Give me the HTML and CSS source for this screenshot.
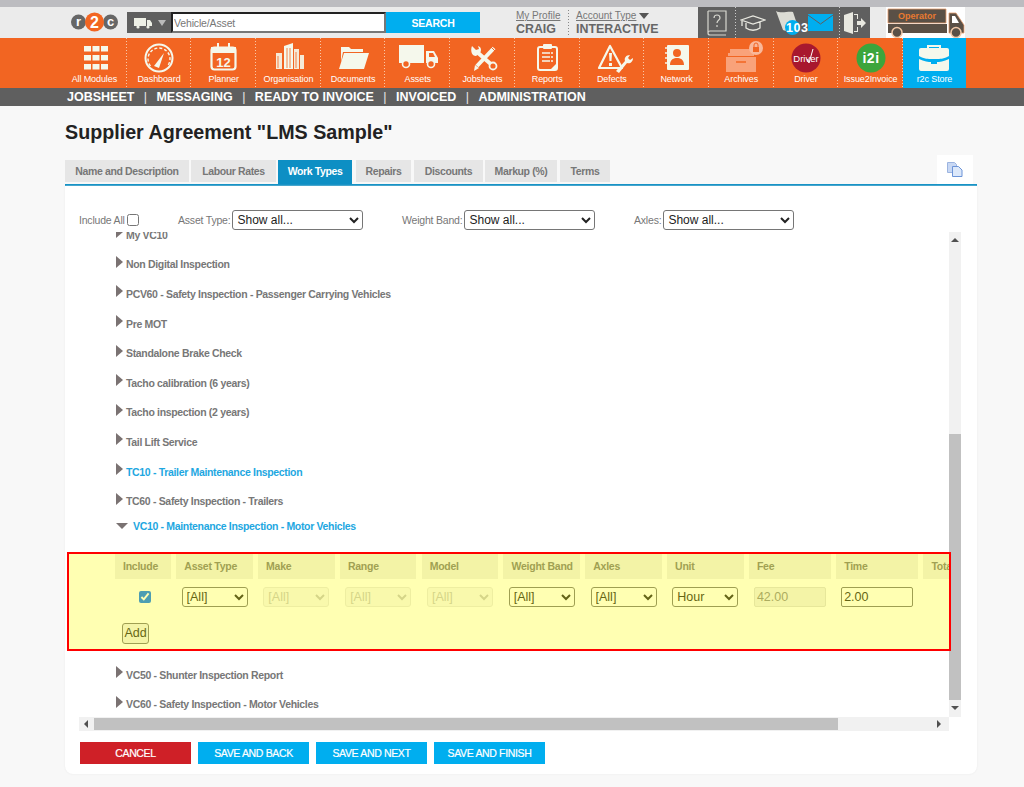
FILE: index.html
```html
<!DOCTYPE html>
<html lang="en">
<head>
<meta charset="utf-8">
<title>Supplier Agreement</title>
<link rel="stylesheet" href="styles.css">
</head>
<body>
<div class="topstrip"></div>
<header class="header">
  <svg class="logo" width="50" height="22" viewBox="0 0 50 22">
    <circle cx="8.5" cy="11" r="7.5" fill="#666"/><circle cx="40.5" cy="11" r="7.5" fill="#666"/><circle cx="24.5" cy="11" r="9.5" fill="#f26522"/>
    <text x="8.5" y="15" class="logo-t">r</text><text x="24.5" y="16.500" class="logo-t2">2</text><text x="40.5" y="15" class="logo-t">c</text>
  </svg>
  <div class="assetpick">
    <svg width="20" height="12" viewBox="0 0 20 12"><path d="M1 1h12v8H1zM14 3h3l2 3v3h-5z" fill="#eef0e6"/><circle cx="5" cy="10" r="1.6" fill="#eef0e6"/><circle cx="15" cy="10" r="1.6" fill="#eef0e6"/></svg>
    <span class="caret"></span>
  </div>
  <input class="search-input" type="text" placeholder="Vehicle/Asset">
  <button class="search-btn">SEARCH</button>
  <div class="profile">
    <a class="plink">My Profile</a>
    <strong>CRAIG</strong>
  </div>
  <div class="account">
    <span class="acct-row"><a class="plink">Account Type</a><i class="acct-caret"></i></span>
    <strong>INTERACTIVE</strong>
  </div>
  <div class="tools">
    <div class="tool tool-book"><svg width="22" height="26" viewBox="0 0 22 26" fill="none" stroke="#d8d8d0" stroke-width="1.2"><path d="M2 1h18v20H4a2 2 0 0 0 0 4h16M2 1v22"/><path d="M8 8c0-4 6-4 6 0 0 2-3 2-3 5" /><path d="M11 15v2"/></svg></div>
    <div class="tool tool-hat"><svg width="26" height="18" viewBox="0 0 26 18" fill="none" stroke="#e8e8e0" stroke-width="1.3"><path d="M1 6l12-4 12 4-12 4zM6 9v5c4 3 10 3 14 0V8M2 7v5"/></svg></div>
    <div class="tool tool-flag">
      <svg width="24" height="26" viewBox="0 0 24 26" fill="#dcdcd4"><path d="M0 1c5 3 12 0 17 1l4 12-3 6c-4-1-8 2-11 0L0 1z"/></svg>
      <span class="badge"></span><span class="badge-text">103</span>
    </div>
    <div class="tool tool-mail"><svg width="25" height="17" viewBox="0 0 25 17"><path d="M0 0h25v17H0z" fill="#00aeef"/><path d="M0 1l12.5 9L25 1" fill="none" stroke="#5f5f5f" stroke-width="1"/></svg></div>
    <div class="tool tool-door"><svg width="24" height="24" viewBox="0 0 24 24" fill="#e8e8e0"><path d="M1 4l9-3v22l-9-3z"/><path d="M11 3h4v5h-1V4h-3zM11 21h4v-5h-1v4h-3z"/><path d="M14 10h4V7l5 5-5 5v-3h-4z"/></svg></div>
  </div>
  <div class="operator">
    <svg width="79" height="31" viewBox="0 0 79 31">
      <path d="M2 2h58v14H2z" fill="#5a5046" stroke="#e8a070" stroke-width=".8"/>
      <path d="M2 17h59v9H2z" fill="#5a5046"/>
      <path d="M63 6h7l8 12v8H63z" fill="#5a5046" stroke="#e8a070" stroke-width=".8"/>
      <path d="M66 9h3l4 7h-7z" fill="#fff"/>
      <circle cx="11" cy="25.500" r="5" fill="#5a5046" stroke="#f0c8a8" stroke-width="1.500"/><circle cx="70" cy="25.500" r="5" fill="#5a5046" stroke="#f0c8a8" stroke-width="1.500"/>
      <text x="31" y="12" class="op-t">Operator</text>
    </svg>
  </div>
</header>

<nav class="modules">
  <a class="mod"><svg class="mi" viewBox="0 0 64 36"><g fill="#f5f8ec"><rect x="22" y="8" width="7" height="5.5"/><rect x="30.5" y="8" width="7" height="5.5"/><rect x="39" y="8" width="7" height="5.5"/><rect x="22" y="17" width="7" height="5.5"/><rect x="30.5" y="17" width="7" height="5.5"/><rect x="39" y="17" width="7" height="5.5"/><rect x="22" y="26" width="7" height="5.5"/><rect x="30.5" y="26" width="7" height="5.5"/><rect x="39" y="26" width="7" height="5.5"/></g></svg><span>All Modules</span></a>
  <a class="mod"><svg class="mi" viewBox="0 0 64 36"><circle cx="32" cy="20" r="13.5" fill="none" stroke="#f5f8ec" stroke-width="2"/><path d="M23.500 28a11 11 0 1 1 17 0" fill="none" stroke="#f5f8ec" stroke-width="1.400" stroke-dasharray="3 2"/><path d="M27 28l10-13-5 15z" fill="#f5f8ec"/></svg><span>Dashboard</span></a>
  <a class="mod"><svg class="mi" viewBox="0 0 64 36"><rect x="19.500" y="9.500" width="24" height="22" rx="3" fill="none" stroke="#f5f8ec" stroke-width="2.200"/><path d="M19 9h25v6H19z" fill="#f5f8ec"/><path d="M26 5v7M37 5v7" stroke="#f5f8ec" stroke-width="2"/><text x="31.500" y="29" class="cal">12</text></svg><span>Planner</span></a>
  <a class="mod"><svg class="mi" viewBox="0 0 64 36"><g fill="#f5f8ec"><path d="M28 8l9-3v26h-9z"/><path d="M20 15h6v16h-6zM38 11h5v20h-5zM44 17h4v14h-4z" opacity=".9"/></g><path d="M31 10v20M34 10v20M22 18v12M40 14v16" stroke="#f26522" stroke-width=".8"/></svg><span>Organisation</span></a>
  <a class="mod"><svg class="mi" viewBox="0 0 64 36"><path d="M20 9h8l2 2h12v3H22l-2 10z" fill="#f5f8ec"/><path d="M23 15h25l-5 16H18z" fill="#f5f8ec"/></svg><span>Documents</span></a>
  <a class="mod"><svg class="mi" viewBox="0 0 64 36"><path d="M13 7h25v18H13z" fill="#f5f8ec"/><path d="M40 13h8l4 7v5H40z" fill="#f5f8ec"/><path d="M43 15h4l2 4h-6z" fill="#f26522"/><circle cx="20" cy="26" r="3.500" fill="#f26522" stroke="#f5f8ec" stroke-width="1.600"/><circle cx="45" cy="26" r="3.500" fill="#f26522" stroke="#f5f8ec" stroke-width="1.600"/></svg><span>Assets</span></a>
  <a class="mod"><svg class="mi" viewBox="0 0 64 36"><path d="M27 14L43 28" stroke="#f5f8ec" stroke-width="4"/><circle cx="43" cy="28" r="3.500" fill="#f26522" stroke="#f5f8ec" stroke-width="1.800"/><path d="M22 8l4 4 3-1-1-3c3 1 4 4 2 7l-4 3c-4 0-6-5-4-10z" fill="#f5f8ec"/><path d="M44 10L27 28" stroke="#f5f8ec" stroke-width="4"/><path d="M24 33l1-6 4 3z" fill="#f5f8ec"/><path d="M41 9l4 4" stroke="#f26522" stroke-width="1"/></svg><span>Jobsheets</span></a>
  <a class="mod"><svg class="mi" viewBox="0 0 64 36"><rect x="23" y="9" width="19" height="23" rx="2" fill="none" stroke="#f5f8ec" stroke-width="2"/><rect x="28" y="6" width="9" height="5" rx="1" fill="#f5f8ec"/><path d="M27 15h11M27 19h11M27 23h11" stroke="#f5f8ec" stroke-width="1.500" stroke-dasharray="8 1"/><path d="M35 32l7-7v7z" fill="#f5f8ec"/></svg><span>Reports</span></a>
  <a class="mod"><svg class="mi" viewBox="0 0 64 36"><path d="M30 8L19 30h23z" fill="none" stroke="#f5f8ec" stroke-width="2.200" stroke-linejoin="round"/><path d="M29 15h3l-.5 8h-2zM29 25h3v3h-3z" fill="#f5f8ec"/><path d="M36 33l9-10c-1-3 1-6 5-6l-2 3 2 2 3-2c0 4-3 6-6 5l-8 10z" fill="#f5f8ec"/></svg><span>Defects</span></a>
  <a class="mod"><svg class="mi" viewBox="0 0 64 36"><rect x="22" y="7" width="22" height="25" rx="1" fill="#f5f8ec"/><path d="M32 11a3.500 3.500 0 0 1 0 8 3.500 3.500 0 0 1 0-8zM25 27c0-6 4-7 7-7s7 1 7 7z" fill="#f26522"/><path d="M20 10h4M20 15h4M20 20h4M20 25h4" stroke="#f5f8ec" stroke-width="1.500"/></svg><span>Network</span></a>
  <a class="mod"><svg class="mi" viewBox="0 0 64 36"><g fill="#f9a27a"><path d="M21 11h24v5H21z"/><path d="M17 19h30v15H17z"/><path d="M19 15h26v3H19z"/></g><path d="M27 24h10" stroke="#f26522" stroke-width="1.500"/><circle cx="47" cy="10" r="7" fill="#f9b89a"/><rect x="44" y="9" width="6" height="5" fill="#f26522"/><path d="M45 9V7a2 2 0 0 1 4 0v2" fill="none" stroke="#f26522"/></svg><span>Archives</span></a>
  <a class="mod"><svg class="mi" viewBox="0 0 64 36"><circle cx="32" cy="20" r="14.500" fill="#a8182e"/><text x="32" y="24" class="drv">Driver</text><path d="M33 21l2 4 4-14" fill="none" stroke="#fff" stroke-width="1"/></svg><span>Driver</span></a>
  <a class="mod"><svg class="mi" viewBox="0 0 64 36"><circle cx="32" cy="20" r="14.500" fill="#3ca53c"/><text x="32" y="25" class="i2i">i2i</text></svg><span>Issue2Invoice</span></a>
  <a class="mod mod-store"><svg class="mi" viewBox="0 0 64 36"><path d="M26 11V8h12v3" fill="none" stroke="#f5f8ec" stroke-width="2"/><path d="M17 12a2 2 0 0 1 2-2h26a2 2 0 0 1 2 2v6c-5 3-10 3-12 3h-6c-2 0-7 0-12-3z" fill="#f5f8ec"/><path d="M17 21c5 2.500 10 3 12 3v2h6v-2c2 0 7-.5 12-3v10a2 2 0 0 1-2 2H19a2 2 0 0 1-2-2z" fill="#f5f8ec"/></svg><span>r2c Store</span></a>
</nav>

<nav class="subnav">
  <a>JOBSHEET</a><i>|</i><a>MESSAGING</a><i>|</i><a>READY TO INVOICE</a><i>|</i><a>INVOICED</a><i>|</i><a>ADMINISTRATION</a>
</nav>

<main class="page">
  <h1 class="title">Supplier Agreement "LMS Sample"</h1>
  <div class="tabs">
    <a class="tab t1">Name and Description</a>
    <a class="tab t2">Labour Rates</a>
    <a class="tab t3 active">Work Types</a>
    <a class="tab t4">Repairs</a>
    <a class="tab t5">Discounts</a>
    <a class="tab t6">Markup (%)</a>
    <a class="tab t7">Terms</a>
    <div class="copybox"><svg width="16" height="15" viewBox="0 0 16 15"><path d="M.5.5h7l2 2v8h-9z" fill="#c8d8f4" stroke="#9cb4e0"/><path d="M5.500 4.500h6l3.500 3.500v6.500H5.500z" fill="#dce8fa" stroke="#6c94d8"/></svg></div>
  </div>
  <section class="card">
    <div class="filters">
      <label class="f f1">Include All <input type="checkbox" class="incall"></label>
      <label class="f f2">Asset Type: <select class="fsel"><option>Show all...</option></select></label>
      <label class="f f3">Weight Band: <select class="fsel"><option>Show all...</option></select></label>
      <label class="f f4">Axles: <select class="fsel"><option>Show all...</option></select></label>
    </div>
    <div class="viewport">
      <div class="scroller">
        <ul class="tree">
          <li class="row"><i class="tri"></i>My VC10</li>
          <li class="row"><i class="tri"></i>Non Digital Inspection</li>
          <li class="row"><i class="tri"></i>PCV60 - Safety Inspection - Passenger Carrying Vehicles</li>
          <li class="row"><i class="tri"></i>Pre MOT</li>
          <li class="row"><i class="tri"></i>Standalone Brake Check</li>
          <li class="row"><i class="tri"></i>Tacho calibration (6 years)</li>
          <li class="row"><i class="tri"></i>Tacho inspection (2 years)</li>
          <li class="row"><i class="tri"></i>Tail Lift Service</li>
          <li class="row link"><i class="tri"></i>TC10 - Trailer Maintenance Inspection</li>
          <li class="row"><i class="tri"></i>TC60 - Safety Inspection - Trailers</li>
          <li class="row open link"><i class="tri-down"></i>VC10 - Maintenance Inspection - Motor Vehicles</li>
          <li class="detail">
            <div class="grid">
              <div class="th">Include</div><div class="th">Asset Type</div><div class="th">Make</div><div class="th">Range</div><div class="th">Model</div><div class="th">Weight Band</div><div class="th">Axles</div><div class="th">Unit</div><div class="th">Fee</div><div class="th">Time</div><div class="th">Total</div>
              <div class="td"><input type="checkbox" checked class="inc"></div>
              <div class="td"><select class="sel"><option>[All]</option></select></div>
              <div class="td"><select class="sel" disabled><option>[All]</option></select></div>
              <div class="td"><select class="sel" disabled><option>[All]</option></select></div>
              <div class="td"><select class="sel" disabled><option>[All]</option></select></div>
              <div class="td"><select class="sel"><option>[All]</option></select></div>
              <div class="td"><select class="sel"><option>[All]</option></select></div>
              <div class="td"><select class="sel"><option>Hour</option></select></div>
              <div class="td"><input class="num" type="text" value="42.00" disabled></div>
              <div class="td"><input class="num" type="text" value="2.00"></div>
              <div class="td"></div>
            </div>
            <button class="add">Add</button>
          </li>
          <li class="row"><i class="tri"></i>VC50 - Shunter Inspection Report</li>
          <li class="row"><i class="tri"></i>VC60 - Safety Inspection - Motor Vehicles</li>
        </ul>
      </div>
      <div class="vbar"><i class="arrow-up"></i><div class="vtrack"><div class="vthumb"></div></div><i class="arrow-down"></i></div>
      <div class="hbar"><i class="arrow-left"></i><div class="htrack"><div class="hthumb"></div></div><i class="arrow-right"></i></div>
    </div>
    <div class="actions">
      <button class="btn cancel">CANCEL</button>
      <button class="btn">SAVE AND BACK</button>
      <button class="btn">SAVE AND NEXT</button>
      <button class="btn">SAVE AND FINISH</button>
    </div>
    <div class="highlight"></div>
  </section>
</main>
</body>
</html>
```

FILE: styles.css
```css
* { box-sizing: border-box; }
html, body { margin: 0; padding: 0; }
body { width: 1024px; height: 787px; overflow: hidden; background: #f8f8f8; font-family: "Liberation Sans", Arial, sans-serif; color: #666; }
a { color: inherit; }

.topstrip { height: 7px; background: #bcbcc0; }

.header { height: 31px; background: #ebebeb; display: flex; align-items: stretch; padding-left: 70px; }
.logo { margin-top: 4px; flex: none; }
.logo-t { font: bold 13px "Liberation Sans", sans-serif; fill: #fff; text-anchor: middle; }
.logo-t2 { font: bold 16px "Liberation Sans", sans-serif; fill: #fff; text-anchor: middle; }
.assetpick { margin: 5px 0 0 7px; width: 44px; height: 21px; background: #5f5f5f; display: flex; align-items: center; padding-left: 6px; gap: 5px; }
.caret { width: 0; height: 0; border: 4.5px solid transparent; border-top: 6px solid #bbb; border-bottom: 0; }
.search-input { margin-top: 5px; width: 215px; height: 21px; border: 2px solid #222; border-right-color: #777; border-bottom-color: #777; padding: 0 1px; font: 10.5px "Liberation Sans", sans-serif; letter-spacing: -.15px; background: #fff; outline: 0; }
.search-input::placeholder { color: #777; }
.search-btn { margin-top: 5px; width: 94px; height: 21px; background: #00aeef; border: 0; color: #fff; font: bold 10.5px "Liberation Sans", sans-serif; letter-spacing: -.2px; padding: 0; }
.profile, .account { display: flex; flex-direction: column; color: #666; margin-top: 3px; height: 25px; }
.profile { margin-left: 36px; width: 52px; }
.account { width: 130px; background-image: linear-gradient(#888 50%, transparent 50%); background-size: 1px 3px; background-repeat: repeat-y; padding-left: 8px; }
.plink { font-size: 10px; line-height: 12px; text-decoration: underline; color: #777; }
.profile strong, .account strong { font-size: 12.4px; line-height: 14px; color: #666; }
.acct-row { display: flex; align-items: center; gap: 3px; height: 12px; }
.acct-caret { width: 0; height: 0; border: 5px solid transparent; border-top: 6px solid #555; border-bottom: 0; }

.tools { width: 172px; background: #5f5f5f; display: flex; align-items: center; }
.tool { position: relative; display: flex; align-items: center; justify-content: center; height: 100%; }
.tool + .tool { background-image: linear-gradient(#ccc 50%, transparent 50%); background-size: 1px 3px; background-repeat: repeat-y; }
.tool-book { width: 37px; }
.tool-hat { width: 35px; }
.tool-flag { width: 31px; justify-content: flex-start; padding-left: 6px; background-image: none !important; }
.tool-mail { width: 38px; background-image: none !important; }
.tool-door { width: 31px; }
.badge { position: absolute; left: 15px; top: 13px; width: 15px; height: 15px; border-radius: 50%; background: #00aeef; }
.badge-text { position: absolute; left: 16px; top: 14px; font: bold 12.5px/14px "Liberation Sans", sans-serif; color: #fff; letter-spacing: .5px; }
.operator { margin-left: 16px; width: 79px; background: #fff; }
.operator svg { display: block; }
.op-t { font: bold 9px "Liberation Sans", sans-serif; fill: #e87a30; text-anchor: middle; }

.modules { height: 50px; background: #f26522; display: flex; padding-left: 62px; }
.mod { width: 64.7px; height: 50px; flex: none; display: flex; flex-direction: column; align-items: center; background-image: linear-gradient(#f8c8a8 50%, transparent 50%); background-size: 1px 3px; background-repeat: repeat-y; background-position: right top; }
.mod span { font-size: 9px; line-height: 10px; color: #fff; white-space: nowrap; letter-spacing: -.1px; }
.mi { width: 64px; height: 36px; flex: none; display: block; }
.mod-store { background: #00aeef; width: 63px; }
.cal { font: bold 13px "Liberation Sans", sans-serif; fill: #f5f8ec; text-anchor: middle; }
.drv { font: 9.5px "Liberation Sans", sans-serif; fill: #fff; text-anchor: middle; }
.i2i { font: bold 14px "Liberation Sans", sans-serif; fill: #fff; text-anchor: middle; letter-spacing: .5px; }

.subnav { height: 18px; background: #5f5f5f; display: flex; align-items: center; padding-left: 67px; color: #fff; font-size: 12.5px; font-weight: bold; line-height: 18px; white-space: nowrap; }
.subnav i { font-style: normal; margin: 0 9.4px; color: #e8e8e8; font-weight: normal; }

.page { padding: 14px 47px 0 65px; }
.title { margin: 0 0 16px; font-size: 19.7px; line-height: 24px; font-weight: bold; color: #222; }

.tabs { display: flex; align-items: flex-start; height: 26px; border-bottom: 2px solid #0d8fc4; position: relative; }
.tab { height: 22px; background: #e6e6e6; color: #777; font-size: 10.5px; letter-spacing: -.38px; font-weight: bold; line-height: 22px; text-align: center; white-space: nowrap; }
.tab.active { height: 24px; background: #0d8fc4; color: #fff; }
.t1 { width: 124px; margin-right: 2px; }
.t2 { width: 85px; margin-right: 2px; }
.t3 { width: 74px; margin-right: 4px; }
.t4 { width: 55px; margin-right: 3px; }
.t5 { width: 69px; margin-right: 2px; }
.t6 { width: 72px; margin-right: 3px; }
.t7 { width: 50px; }
.copybox { width: 36px; height: 29px; background: #fff; margin: -5px 4px 0 auto; display: flex; align-items: center; justify-content: center; }

.card { position: relative; width: 912px; height: 588px; background: #fff; border-radius: 0 0 8px 8px; box-shadow: 0 0 2px #e8e8e8; padding: 24px 14px 0; }
.filters { display: flex; align-items: center; height: 20px; font-size: 10.5px; letter-spacing: -.2px; color: #777; }
.f { display: flex; align-items: center; gap: 2px; white-space: nowrap; }
.f1 { width: 99px; }
.f2 { width: 224px; }
.f3 { width: 232px; }
.incall { width: 12px; height: 12px; margin: 0; }
.fsel { width: 131px; height: 20px; font: 12px "Liberation Sans", sans-serif; letter-spacing: 0; padding: 0; border: 1px solid #767676; border-radius: 3px; background-color: #fff; color: #222; }

.viewport { margin-top: 2px; width: 882px; display: grid; grid-template-columns: 870px 12px; grid-template-rows: 485px 14px; }
.scroller { overflow: hidden; position: relative; }
.tree { list-style: none; margin: -12px 0 0; padding: 0; }
.row { height: 29.6px; padding-left: 37px; display: flex; align-items: center; font-size: 10.5px; letter-spacing: -.33px; font-weight: bold; color: #777; white-space: nowrap; }
.row.link { color: #1ea7e1; }
.row.open { height: 20px; padding-top: 1px; }
.tri { width: 0; height: 0; border: 6.5px solid transparent; border-left: 7px solid #7a7272; border-right: 0; margin: -5px 3px 0 0; flex: none; }
.tri-down { width: 0; height: 0; border: 6.5px solid transparent; border-top: 6px solid #7a7272; border-bottom: 0; margin-right: 5px; flex: none; }
.detail { padding: 18px 0 16px 36px; }
.grid { display: grid; grid-template-columns: 56px repeat(7, 76.5px) 82px 82px 60px; grid-template-rows: 25px 20px; column-gap: 5.3px; row-gap: 8px; }
.th { background: #eee; color: #777; font-size: 10.5px; letter-spacing: -.25px; font-weight: bold; line-height: 25px; padding-left: 8px; white-space: nowrap; overflow: hidden; }
.td { display: flex; justify-content: center; align-items: center; }
.sel { width: 66px; height: 20px; font: 12.5px "Liberation Sans", sans-serif; padding: 0; border: 1px solid #767676; border-radius: 3px; background-color: #fff; color: #222; }
.sel:disabled { border-color: #ddd; background-color: #f4f4f4; color: #aaa; }
.num { width: 72px; height: 20px; font: 12.5px "Liberation Sans", sans-serif; padding: 0 2px; margin: 1px 0 0; border: 1px solid #767676; border-radius: 2px; background: #fff; color: #222; }
.num:disabled { background: #f0f0f0; border-color: #ddd; color: #888; }
.inc { width: 12px; height: 12px; margin: 0 0 0 3px; }
.add { display: block; margin: 16px 0 0 7px; font: 12.5px "Liberation Sans", sans-serif; height: 21px; width: 27px; padding: 0; border: 1px solid #767676; border-radius: 3px; background: #efefef; color: #222; }

.vbar { background: #f1f1f1; display: flex; flex-direction: column; align-items: center; grid-row: 1 / 3; grid-column: 2; height: 485px; }
.vtrack { flex: 1; width: 100%; padding-top: 188px; }
.vthumb { height: 266px; background: #c1c1c1; }
.arrow-up { margin: 6px 0 4px; width: 0; height: 0; border: 4px solid transparent; border-bottom: 4px solid #505050; border-top: 0; }
.arrow-down { margin: 5px 0 7px; width: 0; height: 0; border: 4px solid transparent; border-top: 4px solid #505050; border-bottom: 0; }
.hbar { background: #f1f1f1; display: flex; align-items: center; grid-row: 2; grid-column: 1 / 3; padding: 0 8px 0 5px; width: 870px; }
.htrack { flex: 1; height: 12px; padding-left: 6px; }
.hthumb { width: 744px; height: 12px; background: #c1c1c1; }
.arrow-left { width: 0; height: 0; border: 4px solid transparent; border-right: 4px solid #505050; border-left: 0; }
.arrow-right { width: 0; height: 0; border: 4px solid transparent; border-left: 4px solid #505050; border-right: 0; }

.actions { display: flex; gap: 7px; margin: 11px 0 0 1px; }
.btn { width: 111px; height: 22px; background: #00aeef; color: #fff; border: 0; padding: 0; font: 10.5px "Liberation Sans", sans-serif; letter-spacing: -.35px; -webkit-text-stroke: .2px #fff; }
.btn.cancel { background: #cf2027; }

.highlight { position: absolute; left: 2px; top: 366px; width: 884px; height: 99px; border: 2px solid #f00; background: rgba(255,255,0,.3); pointer-events: none; }
```
